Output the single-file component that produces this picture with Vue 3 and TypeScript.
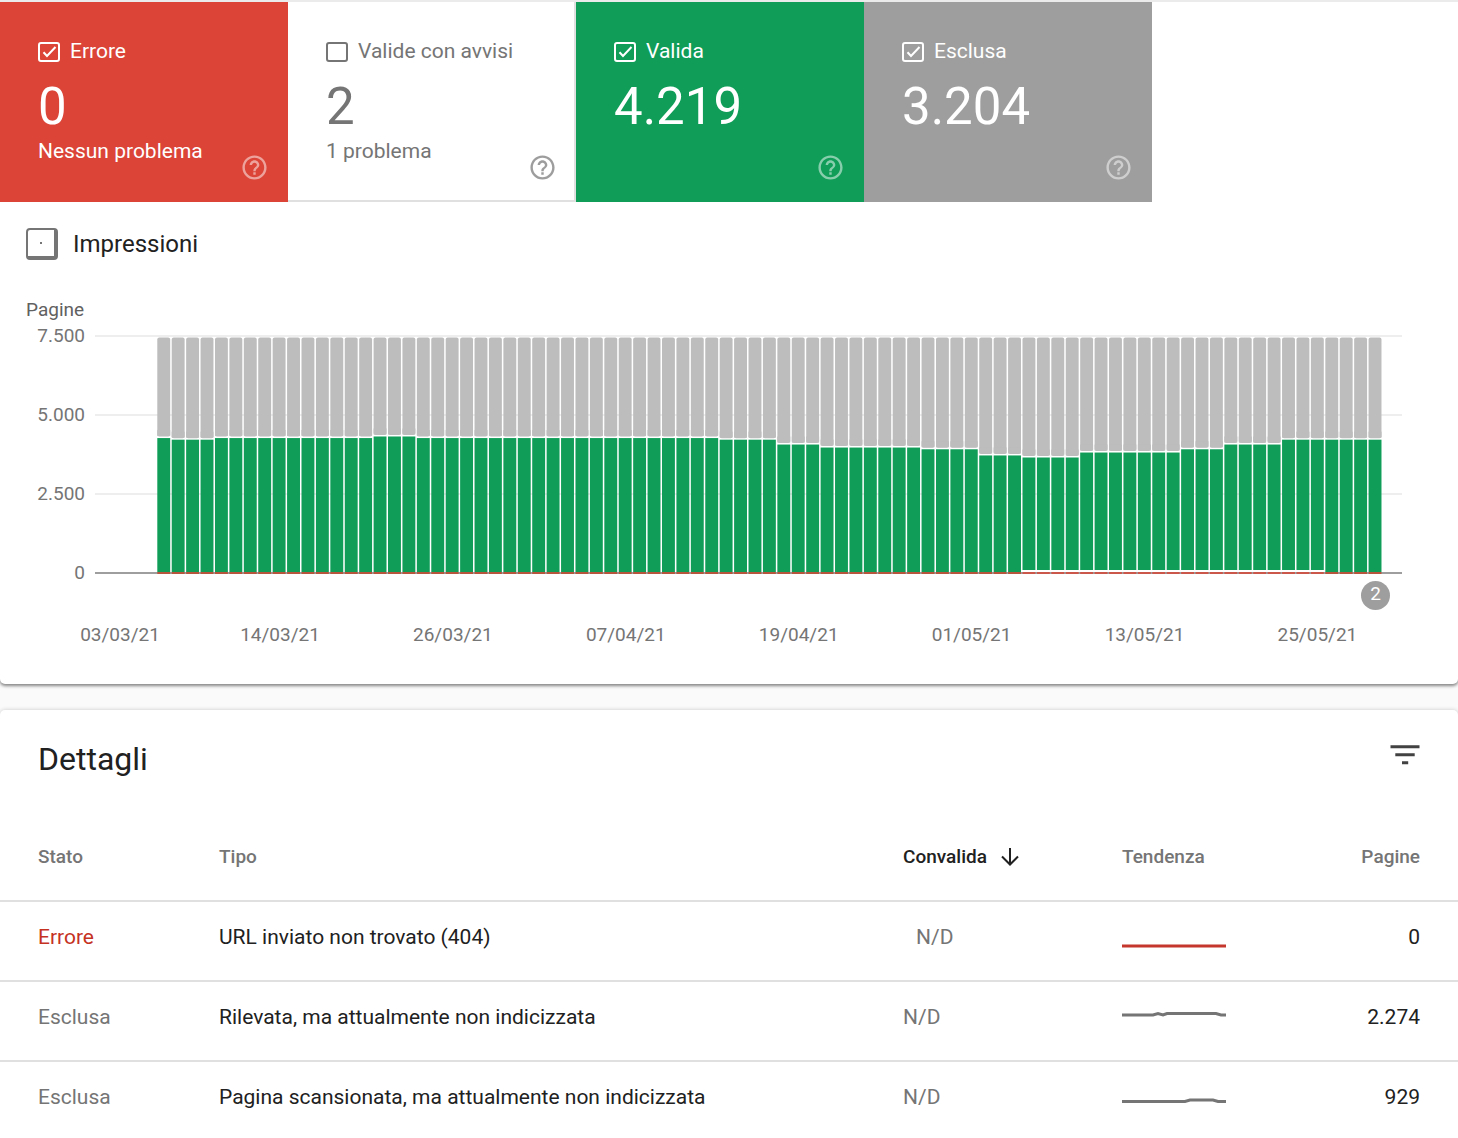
<script setup lang="ts">
import { reactive } from 'vue'

interface StatusCard {
  id: string
  label: string
  total: string
  note: string
  checked: boolean
}

interface DetailRow {
  status: string
  tone: 'error' | 'excluded'
  type: string
  validation: string
  trend: string
  pages: string
}

const cards = reactive<StatusCard[]>([
  { id: 'error', label: 'Errore', total: '0', note: 'Nessun problema', checked: true },
  { id: 'warning', label: 'Valide con avvisi', total: '2', note: '1 problema', checked: false },
  { id: 'valid', label: 'Valida', total: '4.219', note: '', checked: true },
  { id: 'excluded', label: 'Esclusa', total: '3.204', note: '', checked: true },
])

const rows: DetailRow[] = [
  { status: 'Errore', tone: 'error', type: 'URL inviato non trovato (404)', validation: 'N/D', trend: 'M0 25H104', pages: '0' },
  { status: 'Esclusa', tone: 'excluded', type: 'Rilevata, ma attualmente non indicizzata', validation: 'N/D', trend: 'M0 14H31L36 12.5L41 14L45 12.5H94L99 14H104', pages: '2.274' },
  { status: 'Esclusa', tone: 'excluded', type: 'Pagina scansionata, ma attualmente non indicizzata', validation: 'N/D', trend: 'M0 20.5H63L68 19H91L96 20.5H104', pages: '929' },
]

// Chart geometry: 7.500 pages span the distance between the top grid line and the base line.
const topY = 36
const baseY = 273
const maxPages = 7500
const indexedTotal = 7423
const plotUnits = 1307
const firstBar = 62.3
const pitch = 14.42

const yOf = (pages: number): number => baseY - (pages / maxPages) * (baseY - topY)
const pct = (units: number): string => `${(units / plotUnits) * 100}%`

// Runs of consecutive days with the same number of valid pages: [days, pages]
const validRuns: [number, number][] = [
  [1, 4270], [3, 4219], [11, 4270], [3, 4320], [21, 4270], [4, 4219],
  [3, 4065], [7, 3970], [4, 3915], [3, 3720], [4, 3655], [7, 3812],
  [3, 3915], [4, 4065], [7, 4219],
]
const valid: number[] = validRuns.flatMap(([days, pages]) => Array<number>(days).fill(pages))

const bars = valid.map((pages, i) => {
  const top = yOf(pages)
  const warned = i >= 60 && i <= 80
  return {
    x: pct(firstBar + i * pitch),
    top,
    greyTop: yOf(indexedTotal) - 1,
    greyHeight: top - 1.5 - yOf(indexedTotal) + 1,
    greenHeight: baseY - top - (warned ? 3 : 1),
    warned,
  }
})
const barWidth = pct(12.9)

const ticks = [
  { label: '7.500', y: 36 },
  { label: '5.000', y: 115 },
  { label: '2.500', y: 194 },
  { label: '0', y: 273 },
]

const dates = ['03/03/21', '14/03/21', '26/03/21', '07/04/21', '19/04/21', '01/05/21', '13/05/21', '25/05/21'].map(
  (label, i) => ({ label, x: pct(i === 0 ? 25 : 185 + (i - 1) * 172.9) }),
)
</script>

<template>
  <main class="page">
    <section class="panel overview">
      <div class="cards">
        <div v-for="card in cards" :key="card.id" class="card" :class="card.id">
          <div class="card-body">
            <label class="card-label">
              <span class="tick">
                <input v-model="card.checked" type="checkbox" />
                <svg v-if="card.checked" viewBox="0 0 22 20" aria-hidden="true">
                  <path d="M5.500 10.200L9 14L17.500 5" />
                </svg>
              </span>
              <span>{{ card.label }}</span>
            </label>
            <strong class="card-total">{{ card.total }}</strong>
            <span class="card-note">{{ card.note }}</span>
          </div>
          <button class="help" type="button" :aria-label="'Guida: ' + card.label">
            <svg viewBox="0 0 24 24" aria-hidden="true">
              <path d="M11 18h2v-2h-2v2zm1-16C6.480 2 2 6.480 2 12s4.480 10 10 10 10-4.480 10-10S17.520 2 12 2zm0 18c-4.410 0-8-3.590-8-8s3.590-8 8-8 8 3.590 8 8-3.590 8-8 8zm0-14c-2.210 0-4 1.790-4 4h2c0-1.100.9-2 2-2s2 .9 2 2c0 2-3 1.750-3 5h2c0-2.250 3-2.500 3-5 0-2.210-1.790-4-4-4z" />
            </svg>
          </button>
        </div>
      </div>

      <label class="impressions">
        <input type="checkbox" />
        <span>Impressioni</span>
      </label>

      <div class="chart">
        <div class="axis-title">Pagine</div>
        <svg class="plot" role="img" aria-label="Pagine per giorno">
          <g class="grid">
            <rect v-for="t in ticks.slice(0, 3)" :key="t.label" x="0" :y="t.y - 1" width="100%" height="2" />
          </g>
          <rect class="base" x="0" :y="baseY - 1" width="100%" height="2" />
          <g v-for="(b, i) in bars" :key="i">
            <rect class="bar-excluded" :x="b.x" :y="b.greyTop" :width="barWidth" :height="b.greyHeight" rx="2" />
            <rect class="bar-excluded" :x="b.x" :y="b.top - 8" :width="barWidth" height="6" />
            <rect class="bar-valid" :x="b.x" :y="b.top" :width="barWidth" :height="b.greenHeight" />
            <rect class="bar-error" :class="{ warned: b.warned }" :x="b.x" :y="baseY - 1" :width="barWidth" height="2" />
          </g>
          <text v-for="t in ticks" :key="'t' + t.label" class="tick-label" x="-10" :y="t.y + 6">{{ t.label }}</text>
          <text v-for="d in dates" :key="d.label" class="date-label" :x="d.x" y="341">{{ d.label }}</text>
          <circle class="marker" :cx="pct(1280.5)" cy="295.500" r="14.500" />
          <text class="marker-label" :x="pct(1280.5)" y="300">2</text>
        </svg>
      </div>
    </section>

    <section class="panel details">
      <header class="details-head">
        <h2>Dettagli</h2>
        <button class="filter" type="button" aria-label="Filtra">
          <svg viewBox="0 0 30 20" aria-hidden="true">
            <path d="M0.500 0.200H29.500V3.300H0.500zM5.300 8.200H24.700V11.300H5.300zM12 16.200H18.200V19.300H12z" />
          </svg>
        </button>
      </header>
      <table>
        <thead>
          <tr>
            <th class="col-status" scope="col">Stato</th>
            <th class="col-type" scope="col">Tipo</th>
            <th class="col-validation sorted" scope="col" aria-sort="descending">
              <button type="button">
                Convalida
                <svg viewBox="0 0 18 18" aria-hidden="true">
                  <path d="M9 0V16M1 8.500L9 16.500L17 8.500" />
                </svg>
              </button>
            </th>
            <th class="col-trend" scope="col">Tendenza</th>
            <th class="col-pages" scope="col">Pagine</th>
          </tr>
        </thead>
        <tbody>
          <tr v-for="row in rows" :key="row.type" :class="row.tone">
            <td class="col-status">{{ row.status }}</td>
            <td>{{ row.type }}</td>
            <td class="col-validation">{{ row.validation }}</td>
            <td class="col-trend">
              <svg viewBox="0 0 104 40" aria-hidden="true"><path :d="row.trend" /></svg>
            </td>
            <td class="col-pages">{{ row.pages }}</td>
          </tr>
        </tbody>
      </table>
    </section>
  </main>
</template>

<style>
body {
  background: #fafafa;
}
</style>

<style scoped>
.page {
  font-family: Roboto, 'Liberation Sans', sans-serif;
  font-size: 21px;
  line-height: 24px;
  color: #212121;
  overflow: hidden;
}

button {
  padding: 0;
  border: 0;
  background: none;
  font: inherit;
  color: inherit;
  cursor: pointer;
}

.panel {
  background: #fff;
}

.overview {
  border-top: 2px solid #ebebeb;
  border-radius: 0 0 5px 5px;
  padding-bottom: 24px;
  box-shadow: 0 1px 4px rgba(0, 0, 0, 0.3), 0 2px 3px rgba(0, 0, 0, 0.3);
}

.cards {
  display: flex;
}

.card {
  box-sizing: border-box;
  flex: 0 1 288px;
  display: flex;
  justify-content: space-between;
  height: 200px;
  padding: 37px 19px 20px 38px;
  color: #fff;
}

.card-body {
  display: flex;
  flex-direction: column;
  white-space: nowrap;
}

.card.error {
  background: #db4437;
}

.card.warning {
  background: #fff;
  color: #757575;
  box-shadow: inset -2px -2px 0 #e0e0e0;
}

.card.valid {
  background: #0f9d58;
}

.card.excluded {
  background: #9e9e9e;
}

.card-label {
  display: flex;
  align-items: center;
  gap: 10px;
}

.tick {
  display: grid;
  padding-top: 2px;
}

.tick input,
.tick svg {
  grid-area: 1 / 1;
  width: 22px;
  height: 20px;
}

.tick input {
  appearance: none;
  box-sizing: border-box;
  margin: 0;
  border: 2px solid currentColor;
  border-radius: 3px;
  color: inherit;
}

.tick svg {
  pointer-events: none;
  fill: none;
  stroke: currentColor;
  stroke-width: 2;
}

.card-total {
  margin-top: 12px;
  font-size: 51px;
  font-weight: 400;
  line-height: 64px;
}

.help {
  align-self: flex-end;
  width: 29px;
  height: 29px;
  opacity: 0.5;
}

.warning .help {
  opacity: 0.7;
}

.help svg {
  display: block;
  fill: currentColor;
}

.impressions {
  display: flex;
  align-items: center;
  gap: 15px;
  margin: 26px 26px 0;
  font-size: 24px;
  line-height: 32px;
}

.impressions input {
  appearance: none;
  box-sizing: border-box;
  width: 32px;
  height: 32px;
  margin: 0;
  border: solid #757575;
  border-width: 2px 4px 4px 2px;
  border-radius: 4px;
  background: radial-gradient(circle, #757575 1px, transparent 1px);
}

.chart {
  margin-top: 38px;
}

.axis-title {
  padding-left: 26px;
  font-size: 19px;
  color: #616161;
}

.plot {
  display: block;
  box-sizing: border-box;
  width: calc(100% - 151px);
  height: 360px;
  margin: -22px 56px 0 95px;
  overflow: visible;
}

.grid {
  fill: #eee;
}

.base {
  fill: #9e9e9e;
}

.bar-excluded {
  fill: #bdbdbd;
}

.bar-valid {
  fill: #0f9d58;
}

.bar-error {
  fill: #b7553c;
}

.bar-error.warned {
  fill: #cb574b;
}

.plot text {
  font-size: 19px;
  fill: #757575;
}

.plot .tick-label {
  text-anchor: end;
}

.plot .date-label {
  text-anchor: middle;
}

.marker {
  fill: #9e9e9e;
}

.plot .marker-label {
  fill: #fff;
  text-anchor: middle;
}

.details {
  margin-top: 26px;
  border-radius: 5px 5px 0 0;
  box-shadow: 0 0 4px rgba(0, 0, 0, 0.2);
}

.details-head {
  display: flex;
  justify-content: space-between;
  align-items: flex-start;
  padding: 29px 38px 0;
}

.details-head h2 {
  margin: 0;
  font-size: 32px;
  font-weight: 400;
  line-height: 40px;
}

.filter {
  width: 30px;
  height: 20px;
  margin-top: 6px;
}

.filter svg {
  display: block;
  fill: #424242;
}

table {
  width: 100%;
  table-layout: fixed;
  border-collapse: separate;
  border-spacing: 0;
}

th,
td {
  padding: 23px 0 31px;
  border-bottom: 2px solid #e0e0e0;
  text-align: left;
  vertical-align: top;
}

th {
  padding: 66px 0 31px;
  font-size: 19px;
  font-weight: 500;
  color: #757575;
}

th.sorted {
  color: #212121;
}

th button {
  display: flex;
  align-items: center;
  gap: 14px;
}

th button svg {
  width: 18px;
  height: 18px;
  fill: none;
  stroke: currentColor;
  stroke-width: 2;
}

.col-status {
  width: 181px;
  padding-left: 38px;
}

.col-validation {
  width: 219px;
}

.col-trend {
  width: 150px;
}

.col-pages {
  width: 148px;
  padding-right: 38px;
  text-align: right;
}

td.col-status,
td.col-validation {
  color: #757575;
}

.error td.col-status {
  color: #c5321f;
}

.error td.col-validation {
  padding-left: 13px;
}

td.col-trend {
  padding: 19px 0;
}

td.col-trend svg {
  display: block;
  width: 104px;
  height: 40px;
  fill: none;
  stroke: #757575;
  stroke-width: 3;
}

.error td.col-trend svg {
  stroke: #c5372c;
}

tbody tr:last-child td {
  padding-bottom: 29px;
  border-bottom: 0;
}

tbody tr:last-child td.col-trend {
  padding-bottom: 17px;
}
</style>
